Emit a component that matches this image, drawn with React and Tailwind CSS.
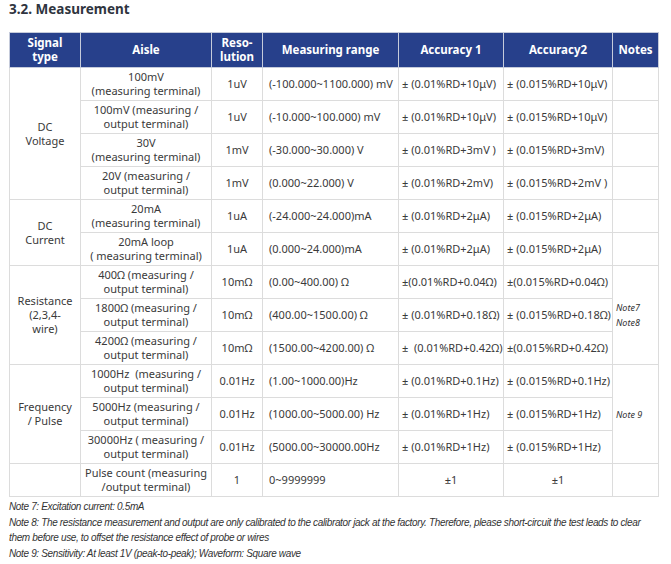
const rows = [
  { aisle: ["100mV", "(measuring terminal)"], res: "1uV", range: "(-100.000~1100.000) mV", a1: "± (0.01%RD+10μV)", a2: "± (0.015%RD+10μV)" },
  { aisle: ["100mV (measuring /", "output terminal)"], res: "1uV", range: "(-10.000~100.000) mV", a1: "± (0.01%RD+10μV)", a2: "± (0.015%RD+10μV)" },
  { aisle: ["30V", "(measuring terminal)"], res: "1mV", range: "(-30.000~30.000) V", a1: "± (0.01%RD+3mV )", a2: "± (0.015%RD+3mV)" },
  { aisle: ["20V (measuring /", "output terminal)"], res: "1mV", range: "(0.000~22.000) V", a1: "± (0.01%RD+2mV)", a2: "± (0.015%RD+2mV )" },
  { aisle: ["20mA", "(measuring terminal)"], res: "1uA", range: "(-24.000~24.000)mA", a1: "± (0.01%RD+2μA)", a2: "± (0.015%RD+2μA)" },
  { aisle: ["20mA loop", "( measuring terminal)"], res: "1uA", range: "(0.000~24.000)mA", a1: "± (0.01%RD+2μA)", a2: "± (0.015%RD+2μA)" },
  { aisle: ["400Ω (measuring /", "output terminal)"], res: "10mΩ", range: "(0.00~400.00) Ω", a1: "±(0.01%RD+0.04Ω)", a2: "±(0.015%RD+0.04Ω)" },
  { aisle: ["1800Ω (measuring /", "output terminal)"], res: "10mΩ", range: "(400.00~1500.00) Ω", a1: "± (0.01%RD+0.18Ω)", a2: "± (0.015%RD+0.18Ω)" },
  { aisle: ["4200Ω (measuring /", "output terminal)"], res: "10mΩ", range: "(1500.00~4200.00) Ω", a1: "±  (0.01%RD+0.42Ω)", a2: "±(0.015%RD+0.42Ω)" },
  { aisle: ["1000Hz  (measuring /", "output terminal)"], res: "0.01Hz", range: "(1.00~1000.00)Hz", a1: "± (0.01%RD+0.1Hz)", a2: "± (0.015%RD+0.1Hz)" },
  { aisle: ["5000Hz (measuring /", "output terminal)"], res: "0.01Hz", range: "(1000.00~5000.00) Hz", a1: "± (0.01%RD+1Hz)", a2: "± (0.015%RD+1Hz)" },
  { aisle: ["30000Hz ( measuring /", "output terminal)"], res: "0.01Hz", range: "(5000.00~30000.00Hz", a1: "± (0.01%RD+1Hz)", a2: "± (0.015%RD+1Hz)" },
  { aisle: ["Pulse count (measuring", "/output terminal)"], res: "1", range: "0~9999999", a1: "±1", a2: "±1", center: true },
];

// signal type cells keyed by the row where they start
const signals = {
  0: { span: 4, lines: ["DC", "Voltage"] },
  4: { span: 2, lines: ["DC", "Current"] },
  6: { span: 3, lines: ["Resistance", "(2,3,4-", "wire)"] },
  9: { span: 3, lines: ["Frequency", "/ Pulse"] },
  12: { span: 1, lines: [] },
};

const notes = {
  0: { span: 1, lines: [] },
  1: { span: 1, lines: [] },
  2: { span: 1, lines: [] },
  3: { span: 1, lines: [] },
  4: { span: 1, lines: [] },
  5: { span: 1, lines: [] },
  6: { span: 3, lines: ["Note7", "Note8"] },
  9: { span: 3, lines: ["Note 9"] },
  12: { span: 1, lines: [] },
};

const td = "border border-[#dcdcdc] p-0 align-middle";
const th = "border border-[#c5cbdb] p-0 align-middle text-center font-bold text-white leading-[14px]";

export default function App() {
  return (
    <div className="w-[671px] h-[564px] bg-white px-[9px] text-[#3a3a3a] font-['Noto_Sans',sans-serif] overflow-hidden">
      <h1 className="text-[13.5px] font-bold text-[#2f3540] leading-[20px] -mt-[1px]">3.2. Measurement</h1>
      <table className="mt-[13px] w-[649px] table-fixed border-collapse border border-[#d2d2d2] text-[11px]">
        <colgroup>
          <col className="w-[71px]" />
          <col className="w-[131px]" />
          <col className="w-[51px]" />
          <col className="w-[136px]" />
          <col className="w-[105px]" />
          <col className="w-[109px]" />
          <col className="w-[46px]" />
        </colgroup>
        <thead>
          <tr className="h-[35px] bg-[#27408b] text-[11.5px]">
            <th className={th}>
              <div>Signal</div>
              <div>type</div>
            </th>
            <th className={th}>Aisle</th>
            <th className={th}>
              <div>Reso-</div>
              <div>lution</div>
            </th>
            <th className={th}>Measuring range</th>
            <th className={th}>Accuracy 1</th>
            <th className={th}>Accuracy2</th>
            <th className={th}>Notes</th>
          </tr>
        </thead>
        <tbody>
          {rows.map((r, i) => (
            <tr key={i} className="h-[33px]">
              {signals[i] && (
                <td rowSpan={signals[i].span} className={`${td} text-center leading-[14px]`}>
                  {signals[i].lines.map((l) => (
                    <div key={l}>{l}</div>
                  ))}
                </td>
              )}
              <td className={`${td} text-center leading-[14px] whitespace-pre`}>
                <div>{r.aisle[0]}</div>
                <div>{r.aisle[1]}</div>
              </td>
              <td className={`${td} text-center`}>{r.res}</td>
              <td className={`${td} pl-[6px] whitespace-pre`}>{r.range}</td>
              <td className={`${td} whitespace-pre ${r.center ? "text-center" : "pl-[3px]"}`}>{r.a1}</td>
              <td className={`${td} whitespace-pre ${r.center ? "text-center" : "pl-[3px]"}`}>{r.a2}</td>
              {notes[i] && (
                <td rowSpan={notes[i].span} className={`${td} pl-[3px] italic text-[9px] leading-[15px] text-[#333]`}>
                  {notes[i].lines.map((l) => (
                    <div key={l}>{l}</div>
                  ))}
                </td>
              )}
            </tr>
          ))}
        </tbody>
      </table>
      <div className="mt-[2px] font-['Liberation_Sans',sans-serif] italic text-[10px] leading-[15.7px] tracking-[-0.035em] text-[#333] whitespace-nowrap">
        <div>Note 7: Excitation current: 0.5mA</div>
        <div>Note 8: The resistance measurement and output are only calibrated to the calibrator jack at the factory. Therefore, please short-circuit the test leads to clear</div>
        <div>them before use, to offset the resistance effect of probe or wires</div>
        <div>Note 9: Sensitivity: At least 1V (peak-to-peak); Waveform: Square wave</div>
      </div>
    </div>
  );
}
